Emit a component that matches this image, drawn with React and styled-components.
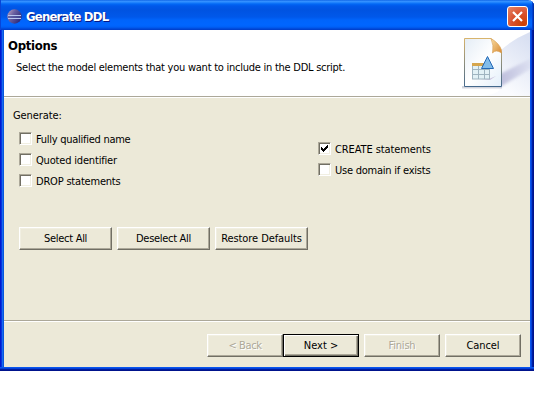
import React from 'react';
import styled, { createGlobalStyle, css } from 'styled-components';

const Global = createGlobalStyle`
  * { box-sizing: border-box; }
  body { margin: 0; background: #fff; font: 11px/13px "DejaVu Sans Condensed", "DejaVu Sans", sans-serif; color: #000; }
`;

const Dialog = styled.main`
  width: 534px; height: 371px; display: flex; flex-direction: column;
  background: linear-gradient(90deg, #0019cf 0 1px, #0734df 1px 2px, #166aee 2px 3px, #0855dd 3px 4px, #ece9d8 4px 530px, #0855ee 530px 531px, #0441d8 531px 532px, #001da0 532px 533px, #00138c 533px);
  border-radius: 0 6px 0 0; overflow: hidden;
`;
const TitleBar = styled.header`
  height: 30px; flex: none; display: flex; align-items: center; padding: 2px 6px 0 7px;
  background: linear-gradient(180deg, #0058e0 0, #3b93ff 1px, #2a8cff 2px, #0268f5 4px, #0058ea 6px, #0053e1 10px, #0058ea 17px, #0064fb 20px, #0066ff 25px, #0060f6 27px, #0046d6 29px, #003bc5 30px);
  box-shadow: inset 1px 0 #0845d8, inset -1px 0 #0030a8, inset -2px 0 #0040d0;
`;
const Title = styled.h1`
  margin: 1px auto 0 4px; color: #fff; font: bold 13px/18px "DejaVu Sans Condensed", sans-serif;
  letter-spacing: -0.8px; text-shadow: 1px 1px #0a1883; white-space: nowrap;
`;
const CloseButton = styled.button`
  width: 21px; height: 21px; padding: 0; border: 1px solid #fff; border-radius: 3px; display: grid; place-items: center;
  background: radial-gradient(circle at 80% 90%, #cc4000, #d9512f 50%, #e58769 100%);
`;
const Banner = styled.section`
  height: 68px; flex: none; margin: 0 4px; display: flex; justify-content: space-between;
  background: #fff; border-bottom: 1px solid #fff; box-shadow: inset 0 -1px #aca899;
`;
const BannerText = styled.div`padding: 8px 0 0 4px;`;
const Heading = styled.h2`
  margin: 0; font: bold 13px/16px "DejaVu Sans Condensed", sans-serif; letter-spacing: -0.3px;
`;
const Text = styled.span`
  letter-spacing: ${p => p.$ls || 0}px; white-space: nowrap;
`;
const Description = styled(Text)`display: block; margin: 7px 0 0 8px;`;
const Body = styled.section`
  flex: 1; margin: 0 4px; padding: 11px 0 0 9px; border-bottom: 1px solid #aca899;
`;
const Columns = styled.div`
  display: grid; grid-template-columns: 299px 1fr; margin: 10px 0 0 6px; align-items: start;
`;
const Column = styled.div`display: grid; gap: 8px; padding-top: ${p => p.$top || 0}px;`;
const Option = styled.label`display: flex; align-items: center; gap: 4px; height: 13px;`;
const OptionText = styled(Text)`padding-top: 2px;`;
const Box = styled.span`
  width: 13px; height: 13px; background: #fff; border: 1px solid; border-color: #aca899 #fff #fff #aca899;
  box-shadow: inset 1px 1px #716f64, inset -1px -1px #f1efe2; display: grid; place-items: center;
`;
const Actions = styled.div`display: flex; gap: 5px; margin: 40px 0 0 6px;`;
const PushButton = styled.button`
  width: ${p => p.$w}px; height: 23px; padding: 0 0 1px; background: #ece9d8; color: #000; font: inherit;
  border: 1px solid; border-color: #fff #716f64 #716f64 #fff;
  box-shadow: inset -1px -1px #aca899, inset 1px 1px #f1efe2;
  ${p => p.$primary && css`
    border-color: #000;
    box-shadow: inset 1px 1px #fff, inset -1px -1px #716f64, inset -2px -2px #aca899;
  `}
  &:disabled { color: #aca899; text-shadow: 1px 1px #fff; }
`;
const Footer = styled.footer`
  height: 46px; flex: none; margin: 0 4px; padding: 12px 9px 0 0; border-top: 1px solid #fff;
  display: flex; justify-content: flex-end; gap: 5px;
`;
const Pair = styled.div`display: flex;`;
const BottomFrame = styled.div`
  height: 4px; flex: none; background: linear-gradient(#0855ee 0 1px, #0441d8 1px 2px, #001da0 2px 3px, #00138c 3px);
`;

const Check = ({ label, ls, checked }) => (
  <Option>
    <Box>{checked && <svg width="7" height="7" shapeRendering="crispEdges"><path d="M0 2h1v1h1v1h1v-1h1v-1h1v-1h1v-1h1v3h-1v1h-1v1h-1v1h-1v1h-1v-1h-1v-1h-1z" /></svg>}</Box>
    <OptionText $ls={ls}>{label}</OptionText>
  </Option>
);
const Button = ({ label, ls, w = 93, ...rest }) => (
  <PushButton $w={w} {...rest}><Text $ls={ls}>{label}</Text></PushButton>
);

const EclipseIcon = () => (
  <svg width="15" height="15" viewBox="0 0 15 15">
    <defs>
      <linearGradient id="orb" x2="1" y2=".6"><stop stopColor="#c3a9c4" /><stop offset=".45" stopColor="#6a5fa0" /><stop offset="1" stopColor="#2b2a7c" /></linearGradient>
    </defs>
    <circle cx="7.5" cy="7.5" r="7.2" fill="url(#orb)" />
    <path d="M1 6.5h13M1 9.500h13" stroke="#b9c6ee" />
    <path d="M1 8h13" stroke="#4c559e" />
  </svg>
);

const BannerArt = () => (
  <svg width="75" height="66" viewBox="455 30 75 66">
    <defs>
      <linearGradient id="sky" gradientUnits="userSpaceOnUse" x1="498" y1="84" x2="530" y2="40"><stop stopColor="#fafbfe" /><stop offset="1" stopColor="#d9e0f2" /></linearGradient>
      <linearGradient id="shade" x2="1"><stop stopColor="#b4b4d6" /><stop offset="1" stopColor="#dde1f2" /></linearGradient>
      <linearGradient id="paper" x2="1" y2="1"><stop stopColor="#e4edf6" /><stop offset=".5" stopColor="#fff" /><stop offset="1" stopColor="#e4effa" /></linearGradient>
      <linearGradient id="fold" x2="1" y2="1"><stop stopColor="#f9dca0" /><stop offset="1" stopColor="#d88b35" /></linearGradient>
      <linearGradient id="edge" x2="0" y2="1"><stop stopColor="#d8b46c" /><stop offset="1" stopColor="#44688c" /></linearGradient>
      <filter id="soft" x="-20%" y="-20%" width="140%" height="140%"><feGaussianBlur stdDeviation="1.8" /></filter>
    </defs>
    <path d="M500 51Q513 39 530 32V96H480Q500 94 500 88z" fill="url(#sky)" />
    <path d="M500 74L532 58V68L500 87z" fill="url(#shade)" opacity=".85" filter="url(#soft)" />
    <path d="M462 86h40v2.500h-40z" fill="#9da1b5" opacity=".45" />
    <path d="M464.5 38.5H491L501.5 52V86.5H464.5z" fill="url(#paper)" stroke="url(#edge)" />
    <path d="M491 38.500Q494 45 492.500 53Q496 49 501.500 53V50Q499 43 491 38.500z" fill="url(#fold)" stroke="#d59a4b" strokeWidth=".6" />
    <path d="M471 78l18 1 7-3-6 4z" fill="#b9aed0" opacity=".7" />
    <path d="M472 64h18v15h-18z" fill="#e2f1f6" />
    <path d="M472.5 66v13M478.5 66v13M484.5 66v13M489.5 66v13M472 69.5h18M472 74.5h18M472 79h18" stroke="#9fb4c0" />
    <path d="M472 63h18v3h-18z" fill="#d6a64d" />
    <path d="M487.5 56.5l6 12h-12z" fill="#82bcea" stroke="#2468b6" />
  </svg>
);

export default function App() {
  return (
    <><Global />
      <Dialog>
        <TitleBar><EclipseIcon /><Title>Generate DDL</Title><CloseButton aria-label="Close"><svg width="13" height="13"><path d="M2 2l9 9M11 2l-9 9" stroke="#fff" strokeWidth="2.2" /></svg></CloseButton></TitleBar>
        <Banner>
          <BannerText><Heading>Options</Heading><Description $ls={-0.25}>Select the model elements that you want to include in the DDL script.</Description></BannerText>
          <BannerArt />
        </Banner>
        <Body>
          <Text $ls={-0.1}>Generate:</Text>
          <Columns>
            <Column><Check label="Fully qualified name" ls={-0.27} /><Check label="Quoted identifier" ls={-0.18} /><Check label="DROP statements" ls={-0.2} /></Column>
            <Column $top={10}><Check label="CREATE statements" ls={-0.1} checked /><Check label="Use domain if exists" ls={-0.23} /></Column>
          </Columns>
          <Actions><Button label="Select All" ls={-0.28} /><Button label="Deselect All" ls={-0.3} /><Button label="Restore Defaults" ls={-0.08} /></Actions>
        </Body>
        <Footer>
          <Pair><Button label="< Back" ls={-0.4} w={76} disabled /><Button label="Next >" w={76} $primary /></Pair>
          <Button label="Finish" ls={-0.2} w={76} disabled /><Button label="Cancel" ls={-0.1} w={76} />
        </Footer>
        <BottomFrame />
      </Dialog>
    </>
  );
}
